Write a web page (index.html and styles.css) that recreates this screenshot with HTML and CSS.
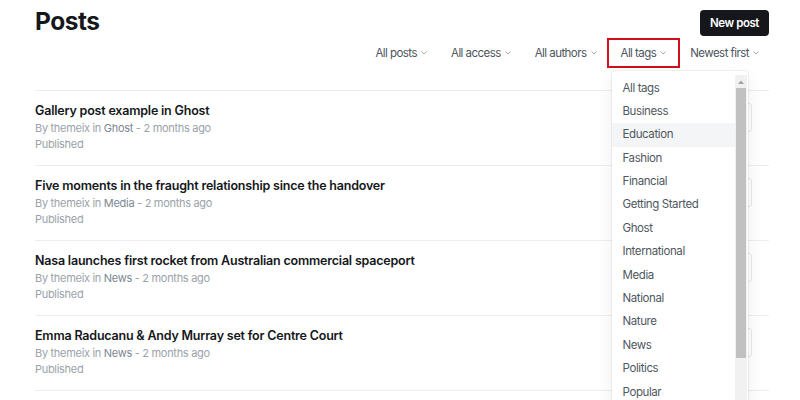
FILE: index.html
```html
<!DOCTYPE html>
<html>
<head>
<meta charset="utf-8">
<link rel="stylesheet" href="styles.css">
</head>
<body>
<main class="page">
  <header class="header">
    <div class="title-row">
      <h1 class="title">Posts</h1>
      <button class="btn-primary">New post</button>
    </div>
    <div class="filters">
      <div class="filter">All posts<svg class="chev" viewBox="0 0 6 4" width="6" height="4"><polyline points="0.5,0.5 3,3 5.5,0.5"/></svg></div>
      <div class="filter">All access<svg class="chev" viewBox="0 0 6 4" width="6" height="4"><polyline points="0.5,0.5 3,3 5.5,0.5"/></svg></div>
      <div class="filter">All authors<svg class="chev" viewBox="0 0 6 4" width="6" height="4"><polyline points="0.5,0.5 3,3 5.5,0.5"/></svg></div>
      <div class="filter filter-active">All tags<svg class="chev" viewBox="0 0 6 4" width="6" height="4"><polyline points="0.5,0.5 3,3 5.5,0.5"/></svg>
        <div class="dropdown">
          <ul class="options">
            <li>All tags</li>
            <li>Business</li>
            <li class="hover">Education</li>
            <li>Fashion</li>
            <li>Financial</li>
            <li>Getting Started</li>
            <li>Ghost</li>
            <li>International</li>
            <li>Media</li>
            <li>National</li>
            <li>Nature</li>
            <li>News</li>
            <li>Politics</li>
            <li>Popular</li>
          </ul>
          <div class="scrollbar">
            <div class="sb-arrow"><svg viewBox="0 0 6 4" width="6" height="4"><polygon points="0,4 3,0.5 6,4"/></svg></div>
            <div class="sb-thumb"></div>
          </div>
        </div>
      </div>
      <div class="filter">Newest first<svg class="chev" viewBox="0 0 6 4" width="6" height="4"><polyline points="0.5,0.5 3,3 5.5,0.5"/></svg></div>
    </div>
  </header>

  <ol class="posts">
    <li class="post">
      <div class="post-main">
        <div class="post-title">Gallery post example in Ghost</div>
        <div class="post-meta">By themeix in <span class="tag">Ghost</span> - 2 months ago</div>
        <div class="post-status">Published</div>
      </div>
      <div class="post-side"></div>
    </li>
    <li class="post">
      <div class="post-main">
        <div class="post-title">Five moments in the fraught relationship since the handover</div>
        <div class="post-meta">By themeix in <span class="tag">Media</span> - 2 months ago</div>
        <div class="post-status">Published</div>
      </div>
      <div class="post-side"></div>
    </li>
    <li class="post">
      <div class="post-main">
        <div class="post-title">Nasa launches first rocket from Australian commercial spaceport</div>
        <div class="post-meta">By themeix in <span class="tag">News</span> - 2 months ago</div>
        <div class="post-status">Published</div>
      </div>
      <div class="post-side"></div>
    </li>
    <li class="post">
      <div class="post-main">
        <div class="post-title">Emma Raducanu &amp; Andy Murray set for Centre Court</div>
        <div class="post-meta">By themeix in <span class="tag">News</span> - 2 months ago</div>
        <div class="post-status">Published</div>
      </div>
      <div class="post-side"></div>
    </li>
  </ol>
</main>
</body>
</html>
```

FILE: styles.css
```css
* { box-sizing: border-box; }
html, body { margin: 0; padding: 0; background: #fff; overflow: hidden; }
body {
  font-family: Inter, "Noto Sans", sans-serif;
  color: #15171a;
  width: 800px;
  height: 400px;
}
.page { padding: 0 31px 0 35px; }

.header { display: flex; flex-direction: column; }
.title-row {
  display: flex;
  justify-content: space-between;
  align-items: center;
  padding-top: 6px;
}
.title {
  margin: 0;
  font-size: 24.5px;
  line-height: 31px;
  font-weight: 700;
  letter-spacing: -0.5px;
  color: #15171a;
}
.btn-primary {
  width: 69px;
  height: 26px;
  padding: 0;
  border: 0;
  border-radius: 4px;
  background: #15171a;
  color: #fff;
  font-family: inherit;
  font-size: 11.5px;
  font-weight: 600;
  letter-spacing: -0.45px;
  margin-top: 2px;
}

.filters {
  display: flex;
  justify-content: flex-end;
  margin-top: 3px;
  margin-right: -2px;
  margin-bottom: 24px;
}
.filter {
  position: relative;
  display: flex;
  align-items: center;
  height: 26px;
  padding: 0 12px;
  font-size: 11.5px;
  letter-spacing: -0.55px;
  color: #4d555d;
}
.filter-active { outline: 2px solid #d0101b; }
.chev {
  margin-left: 4px;
  fill: none;
  stroke: #a4abb2;
  stroke-width: 1;
}

.dropdown {
  position: absolute;
  left: 3px;
  top: 31px;
  width: 136px;
  display: flex;
  background: #fff;
  border-radius: 3px;
  box-shadow: 0 0 0 1px rgba(0,0,0,0.05), 0 6px 16px rgba(0,0,0,0.08);
  z-index: 10;
  padding-top: 5.5px;
  letter-spacing: normal;
}
.options {
  list-style: none;
  margin: 0;
  padding: 0;
  flex: 1;
}
.options li {
  height: 23.4px;
  line-height: 23.4px;
  padding-left: 11px;
  font-size: 11.5px;
  letter-spacing: -0.4px;
  color: #50575e;
  white-space: nowrap;
}
.options li.hover { background: #f4f5f6; }
.scrollbar {
  width: 12px;
  background: #f1f1f1;
  margin-right: 1px;
  margin-top: -1.5px;
  display: flex;
  flex-direction: column;
  align-items: center;
}
.sb-arrow {
  height: 13px;
  width: 100%;
  display: flex;
  align-items: center;
  justify-content: center;
}
.sb-arrow svg { fill: #a3a3a3; }
.sb-thumb {
  width: 10px;
  height: 270px;
  background: #c1c1c1;
}

.posts {
  list-style: none;
  margin: 0;
  padding: 0;
  border-top: 1px solid #ebeef0;
}
.post {
  display: flex;
  justify-content: space-between;
  align-items: flex-start;
  height: 75px;
  border-bottom: 1px solid #ebeef0;
  padding: 11px 0 0;
}
.post-title {
  font-size: 12.5px;
  line-height: 18px;
  font-weight: 600;
  letter-spacing: -0.2px;
  color: #15171a;
}
.post-meta, .post-status {
  font-size: 11px;
  line-height: 16px;
  letter-spacing: -0.3px;
  color: #9aa2aa;
}
.tag { color: #7c8792; }
.post-side {
  width: 60px;
  height: 29px;
  margin-top: 1px;
  margin-right: 17px;
  border: 1px solid #e6e9eb;
  border-radius: 3px;
}
```
